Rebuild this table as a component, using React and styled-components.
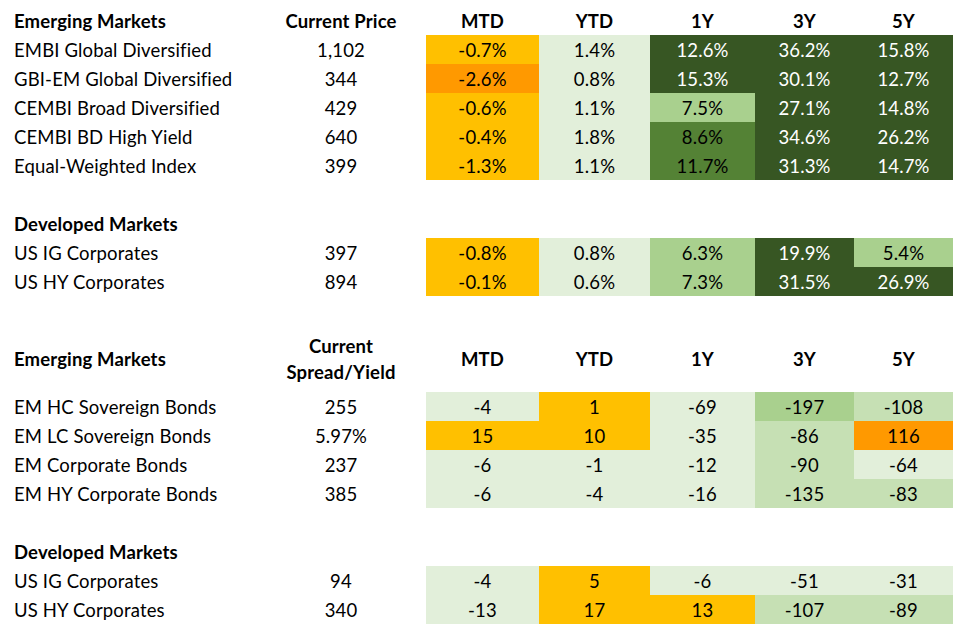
import React from "react"
import styled, { createGlobalStyle } from "styled-components"

const GlobalStyle = createGlobalStyle`
  body {
    margin: 0;
    background: #fff;
    font-family: Lato, "Liberation Sans", sans-serif;
    color: #000;
  }
`

// excel-ish conditional formatting fills
const fills = {
  o: "#FFC000",
  O: "#FF9900",
  l: "#E2EFDA",
  m: "#C6E0B4",
  g: "#A9D08E",
  G: "#548235",
  D: "#375623",
}

const columns = ["MTD", "YTD", "1Y", "3Y", "5Y"]

const priceTables = [
  {
    title: "Emerging Markets",
    rows: [
      ["EMBI Global Diversified", "1,102", [["-0.7%", "o"], ["1.4%", "l"], ["12.6%", "D"], ["36.2%", "D"], ["15.8%", "D"]]],
      ["GBI-EM Global Diversified", "344", [["-2.6%", "O"], ["0.8%", "l"], ["15.3%", "D"], ["30.1%", "D"], ["12.7%", "D"]]],
      ["CEMBI Broad Diversified", "429", [["-0.6%", "o"], ["1.1%", "l"], ["7.5%", "g"], ["27.1%", "D"], ["14.8%", "D"]]],
      ["CEMBI BD High Yield", "640", [["-0.4%", "o"], ["1.8%", "l"], ["8.6%", "G"], ["34.6%", "D"], ["26.2%", "D"]]],
      ["Equal-Weighted Index", "399", [["-1.3%", "o"], ["1.1%", "l"], ["11.7%", "G"], ["31.3%", "D"], ["14.7%", "D"]]],
    ],
  },
  {
    title: "Developed Markets",
    rows: [
      ["US IG Corporates", "397", [["-0.8%", "o"], ["0.8%", "l"], ["6.3%", "g"], ["19.9%", "D"], ["5.4%", "g"]]],
      ["US HY Corporates", "894", [["-0.1%", "o"], ["0.6%", "l"], ["7.3%", "g"], ["31.5%", "D"], ["26.9%", "D"]]],
    ],
  },
]

const spreadTables = [
  {
    title: "Emerging Markets",
    rows: [
      ["EM HC Sovereign Bonds", "255", [["-4", "l"], ["1", "o"], ["-69", "l"], ["-197", "g"], ["-108", "m"]]],
      ["EM LC Sovereign Bonds", "5.97%", [["15", "o"], ["10", "o"], ["-35", "l"], ["-86", "m"], ["116", "O"]]],
      ["EM Corporate Bonds", "237", [["-6", "l"], ["-1", "l"], ["-12", "l"], ["-90", "m"], ["-64", "l"]]],
      ["EM HY Corporate Bonds", "385", [["-6", "l"], ["-4", "l"], ["-16", "l"], ["-135", "m"], ["-83", "m"]]],
    ],
  },
  {
    title: "Developed Markets",
    rows: [
      ["US IG Corporates", "94", [["-4", "l"], ["5", "o"], ["-6", "l"], ["-51", "l"], ["-31", "l"]]],
      ["US HY Corporates", "340", [["-13", "l"], ["17", "o"], ["13", "o"], ["-107", "m"], ["-89", "m"]]],
    ],
  },
]

const Sheet = styled.div`
  padding: 6px 0 0 14px;
  font-size: 18.5px;
  letter-spacing: 0.15px;
`

const Row = styled.div`
  display: grid;
  grid-template-columns: 242px 170px 113px 111px 105px 99px 99px;
  height: ${(p) => p.$height || 29}px;
  align-items: stretch;
`

const Spacer = styled.div`
  height: 29px;
`

const Label = styled.div`
  display: flex;
  align-items: center;
  padding-top: 1px;
  white-space: nowrap;
  font-weight: ${(p) => (p.$bold ? 700 : 400)};
`

const Center = styled.div`
  display: flex;
  align-items: center;
  justify-content: center;
  padding-top: 1px;
  text-align: center;
  white-space: nowrap;
  font-weight: ${(p) => (p.$bold ? 700 : 400)};
  line-height: 26px;
`

const Value = styled(Center)`
  background: ${(p) => fills[p.$fill]};
  color: ${(p) => (p.$fill === "D" ? "#fff" : "#000")};
`

const HeaderRow = ({ title, second, height }) => (
  <Row $height={height}>
    <Label $bold>{title}</Label>
    <Center $bold>{second}</Center>
    {columns.map((c) => (
      <Center $bold key={c}>{c}</Center>
    ))}
  </Row>
)

const TitleRow = ({ title }) => (
  <Row>
    <Label $bold>{title}</Label>
  </Row>
)

const DataRow = ({ row }) => {
  const [name, current, values] = row
  return (
    <Row>
      <Label>{name}</Label>
      <Center>{current}</Center>
      {values.map(([v, f], i) => (
        <Value $fill={f} key={i}>{v}</Value>
      ))}
    </Row>
  )
}

const Block = ({ tables, second, headHeight }) => (
  <>
    <HeaderRow title={tables[0].title} second={second} height={headHeight} />
    {tables[0].rows.map((r) => <DataRow row={r} key={r[0]} />)}
    <Spacer />
    <TitleRow title={tables[1].title} />
    {tables[1].rows.map((r) => <DataRow row={r} key={r[0]} />)}
  </>
)

export default function App() {
  return (
    <Sheet>
      <GlobalStyle />
      <Block tables={priceTables} second="Current Price" />
      <Spacer />
      <Block
        tables={spreadTables}
        headHeight={67}
        second={<span>Current<br />Spread/Yield</span>}
      />
    </Sheet>
  )
}
